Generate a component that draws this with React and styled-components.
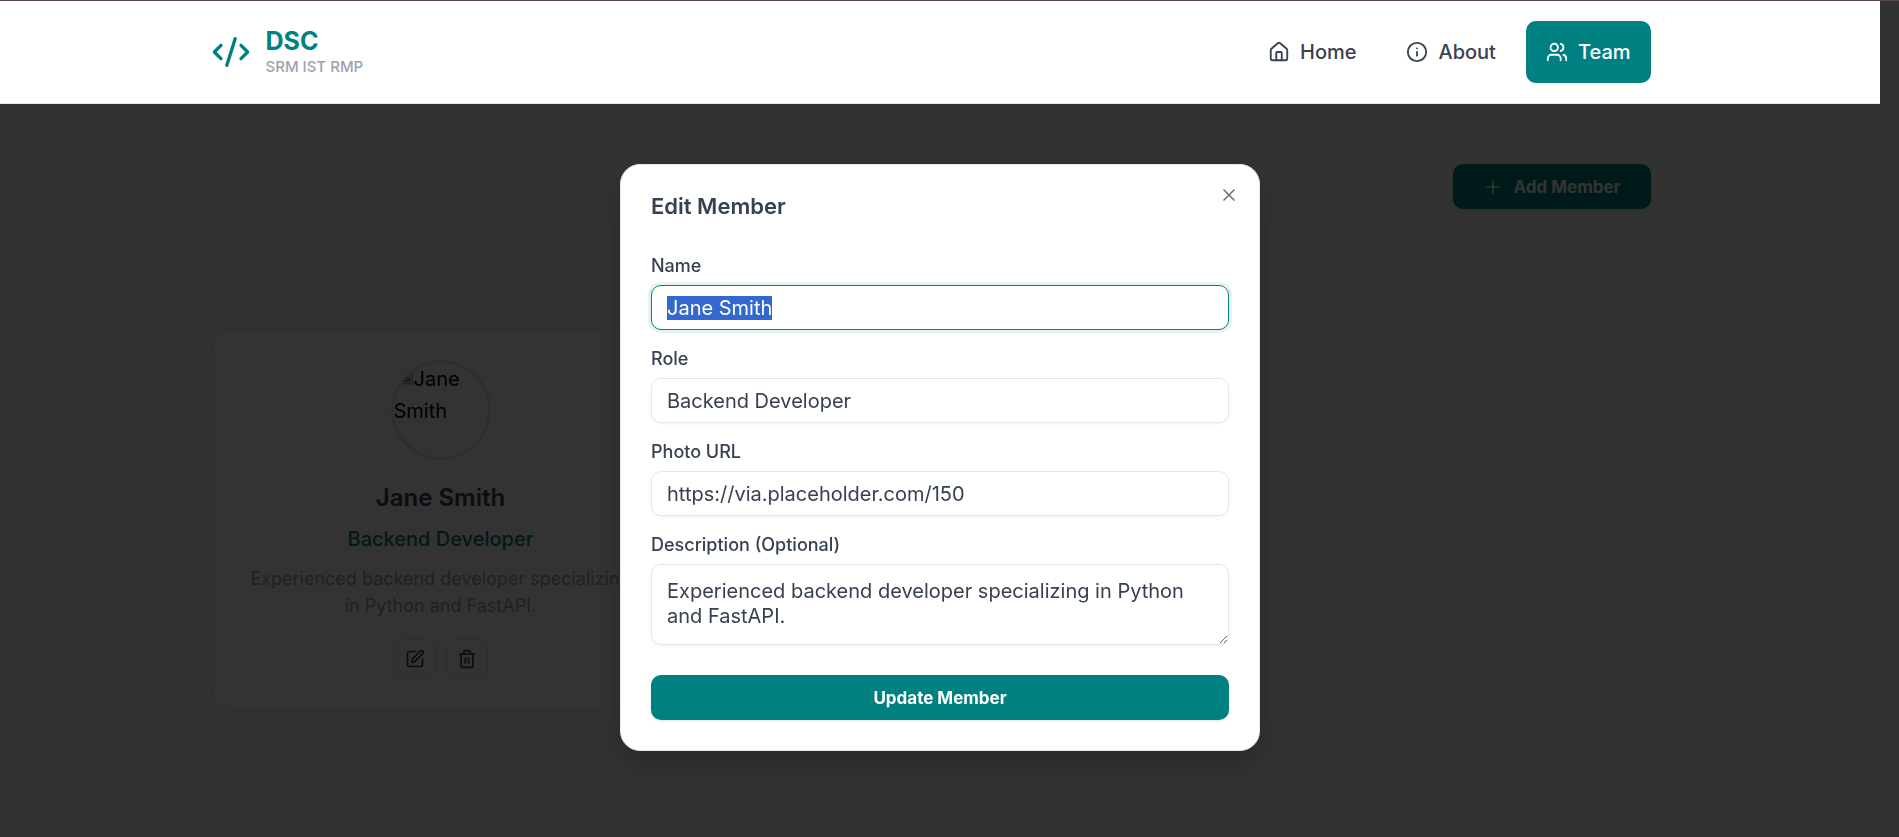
import React, { useEffect, useRef } from "react";
import styled, { createGlobalStyle, css } from "styled-components";
import { CodeXml, House, Info, Users, Plus, SquarePen, Trash2, X } from "lucide-react";

const teal = "#008080";
const ink = "#374151";
const line = "#e5e7eb";

const GlobalStyle = createGlobalStyle`
  *, *::before, *::after { box-sizing: border-box; }
  body {
    margin: 0;
    background: #f7f7f7;
    color: #000;
    font-family: Inter, "Liberation Sans", sans-serif;
    font-size: 20px;
    line-height: 32px;
  }
  h1, h2, h3, p { margin: 0; }
  button, input, textarea { font-family: inherit; }
`;

const gutter = 19;

const Page = styled.div`
  min-height: 100vh;
  border-top: 1px solid #574646;
`;

const Header = styled.header`
  position: relative;
  z-index: 20;
  margin-right: ${gutter}px;
  padding: 20px ${gutter}px 20px 0;
  background: #fff;
  border-bottom: 1px solid #e0eceb;
`;

const Container = styled.div`
  width: 100%;
  max-width: 1440px;
  margin: 0 auto;
`;

const Bar = styled(Container)`
  display: flex;
  align-items: center;
  justify-content: space-between;
`;

const Brand = styled.a`
  display: flex;
  align-items: center;
  gap: 15px;
  color: ${teal};
  text-decoration: none;
`;

const BrandText = styled.span`
  display: flex;
  flex-direction: column;
`;

const BrandName = styled.span`
  font-size: 25px;
  font-weight: 700;
  line-height: 30px;
`;

const BrandSub = styled.span`
  font-size: 15px;
  font-weight: 500;
  line-height: 22px;
  color: #9ca3af;
`;

const Nav = styled.nav`
  display: flex;
  gap: 10px;
`;

const NavLink = styled.a`
  display: flex;
  align-items: center;
  gap: 10px;
  padding: 15px 20px;
  border-radius: 10px;
  font-weight: 500;
  text-decoration: none;
  color: ${(p) => (p.$active ? "#fff" : ink)};
  background: ${(p) => (p.$active ? teal : "transparent")};
`;

const Main = styled.main`
  padding: 60px ${gutter * 2}px 60px 0;
`;

const Actions = styled(Container)`
  display: flex;
  justify-content: flex-end;
  margin-bottom: 120px;
`;

const PrimaryButton = styled.button`
  display: flex;
  align-items: center;
  justify-content: center;
  gap: 10px;
  height: 45px;
  padding: 0 30px;
  border: 0;
  border-radius: 10px;
  background: ${teal};
  color: #fff;
  font-size: 17px;
  font-weight: 700;
  box-shadow: 0 1px 3px rgba(0, 0, 0, 0.12);
  width: ${(p) => (p.$wide ? "100%" : "auto")};
`;

const MemberGrid = styled(Container)`
  display: grid;
  grid-template-columns: repeat(3, 1fr);
  gap: 30px;
`;

const Card = styled.article`
  display: flex;
  flex-direction: column;
  align-items: center;
  padding: 30px;
  border: 1px solid ${line};
  border-radius: 20px;
  background: #fdfdfd;
  text-align: center;
`;

const Avatar = styled.div`
  width: 100px;
  height: 100px;
  margin-bottom: 20px;
  border: 3px solid ${line};
  border-radius: 50%;
  overflow: hidden;
  text-align: left;
  svg { vertical-align: baseline; }
`;

const MemberName = styled.h3`
  margin-bottom: 8px;
  font-size: 24px;
  font-weight: 600;
  line-height: 36px;
  color: ${ink};
`;

const MemberRole = styled.p`
  margin-bottom: 11px;
  font-weight: 500;
  line-height: 30px;
  color: ${teal};
`;

const MemberBio = styled.p`
  margin-bottom: 20px;
  font-size: 18px;
  line-height: 27px;
  color: #9ca3af;
`;

const CardActions = styled.div`
  display: flex;
  gap: 10px;
`;

const IconButton = styled.button`
  display: flex;
  align-items: center;
  justify-content: center;
  width: 42px;
  height: 40px;
  padding: 0;
  border: 1px solid ${line};
  border-radius: 8px;
  background: transparent;
  color: ${ink};
`;

const Overlay = styled.div`
  position: fixed;
  inset: 1px 0 0;
  z-index: 10;
  display: flex;
  align-items: flex-start;
  justify-content: center;
  padding: 163px ${gutter}px 0 0;
  overflow: hidden;
  background: rgba(0, 0, 0, 0.8);
`;

const Dialog = styled.section`
  position: relative;
  width: 640px;
  max-width: 100%;
  padding: 30px;
  border: 1px solid ${line};
  border-radius: 20px;
  background: #fff;
  box-shadow: 0 12px 30px rgba(0, 0, 0, 0.22);
`;

const DialogTitle = styled.h2`
  margin-bottom: 38px;
  font-size: 22px;
  font-weight: 600;
  line-height: 22px;
  color: ${ink};
`;

const CloseButton = styled.button`
  position: absolute;
  top: 20px;
  right: 20px;
  display: flex;
  padding: 0;
  border: 0;
  background: transparent;
  color: #6b7280;
`;

const Form = styled.form`
  display: flex;
  flex-direction: column;
  gap: 18px;
`;

const Field = styled.div`
  display: flex;
  flex-direction: column;
  gap: 8px;
`;

const Label = styled.label`
  font-size: 18px;
  font-weight: 500;
  line-height: 22px;
  color: ${ink};
`;

const control = css`
  width: 100%;
  border: 1px solid ${line};
  border-radius: 10px;
  background: #fff;
  color: ${ink};
  font-size: 20px;
  box-shadow: 0 1px 3px rgba(0, 0, 0, 0.06);
  outline: none;
  &:focus {
    border-color: ${teal};
    box-shadow: 0 0 0 3px rgba(0, 128, 128, 0.1);
  }
  &::selection {
    background: rgba(51, 103, 209, 0.996);
    color: #fff;
  }
`;

const Input = styled.input`
  ${control}
  height: 45px;
  padding: 0 15px;
`;

const TextArea = styled.textarea`
  ${control}
  display: block;
  height: 81px;
  padding: 14px 15px;
  line-height: 25px;
  resize: vertical;
`;

const Submit = styled.div`
  padding-top: 12px;
`;

const BrokenImage = () => (
  <svg width="20" height="20" viewBox="0 0 16 16" aria-hidden="true">
    <path d="M1 1h9l5 5v8H1z" fill="#fff" stroke="#a0a0a0" />
    <path d="M2 2h8v4h4v5l-4-3-8 5z" fill="#c2d5f2" />
    <path d="M3 13l6-6 5 4v2z" fill="#6fa65a" />
    <path d="M10 1v5h5" fill="#fff" stroke="#a0a0a0" />
  </svg>
);

const links = [
  { label: "Home", icon: House },
  { label: "About", icon: Info },
  { label: "Team", icon: Users, active: true },
];

const member = {
  name: "Jane Smith",
  role: "Backend Developer",
  photo: "https://via.placeholder.com/150",
  bio: "Experienced backend developer specializing in Python and FastAPI.",
};

function EditDialog() {
  const nameRef = useRef(null);
  useEffect(() => {
    nameRef.current.focus();
    nameRef.current.select();
  }, []);

  return (
    <Overlay>
      <Dialog role="dialog" aria-modal="true" aria-labelledby="edit-title">
        <DialogTitle id="edit-title">Edit Member</DialogTitle>
        <Form onSubmit={(e) => e.preventDefault()}>
          <Field>
            <Label htmlFor="name">Name</Label>
            <Input id="name" ref={nameRef} defaultValue={member.name} />
          </Field>
          <Field>
            <Label htmlFor="role">Role</Label>
            <Input id="role" defaultValue={member.role} />
          </Field>
          <Field>
            <Label htmlFor="photo">Photo URL</Label>
            <Input id="photo" defaultValue={member.photo} />
          </Field>
          <Field>
            <Label htmlFor="bio">Description (Optional)</Label>
            <TextArea id="bio" spellCheck={false} defaultValue={member.bio} />
          </Field>
          <Submit>
            <PrimaryButton type="submit" $wide>Update Member</PrimaryButton>
          </Submit>
        </Form>
        <CloseButton type="button" aria-label="Close">
          <X size={20} />
        </CloseButton>
      </Dialog>
    </Overlay>
  );
}

export default function App() {
  return (
    <Page>
      <GlobalStyle />
      <Header>
        <Bar>
          <Brand href="#home">
            <CodeXml size={40} />
            <BrandText>
              <BrandName>DSC</BrandName>
              <BrandSub>SRM IST RMP</BrandSub>
            </BrandText>
          </Brand>
          <Nav>
            {links.map(({ label, icon: Icon, active }) => (
              <NavLink key={label} href={`#${label.toLowerCase()}`} $active={active}>
                <Icon size={22} />
                {label}
              </NavLink>
            ))}
          </Nav>
        </Bar>
      </Header>
      <Main>
        <Actions>
          <PrimaryButton type="button">
            <Plus size={20} />
            Add Member
          </PrimaryButton>
        </Actions>
        <MemberGrid>
          <Card>
            <Avatar>
              <BrokenImage />
              {member.name}
            </Avatar>
            <MemberName>{member.name}</MemberName>
            <MemberRole>{member.role}</MemberRole>
            <MemberBio>{member.bio}</MemberBio>
            <CardActions>
              <IconButton type="button" aria-label="Edit member">
                <SquarePen size={20} />
              </IconButton>
              <IconButton type="button" aria-label="Delete member">
                <Trash2 size={20} />
              </IconButton>
            </CardActions>
          </Card>
        </MemberGrid>
      </Main>
      <EditDialog />
    </Page>
  );
}
